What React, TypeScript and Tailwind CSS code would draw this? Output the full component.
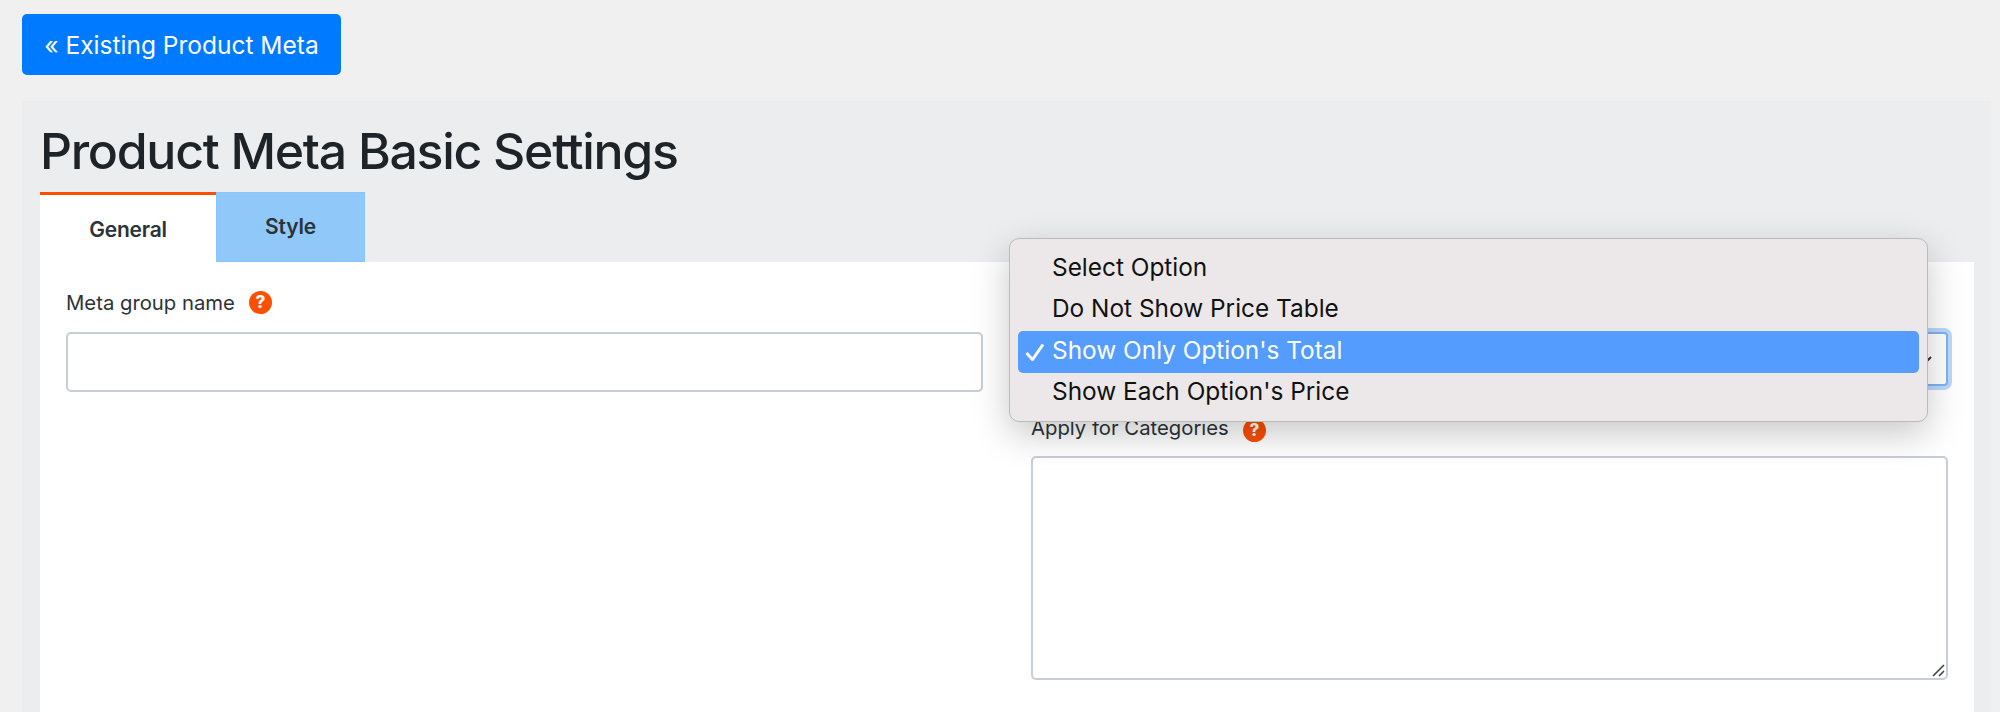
import React from "react";

function Help() {
  return (
    <span className="inline-flex h-[23px] w-[23px] items-center justify-center rounded-full bg-[#fc4f00] text-[17px] font-extrabold leading-none text-white">
      ?
    </span>
  );
}

const options = ["Select Option", "Do Not Show Price Table", "Show Only Option's Total", "Show Each Option's Price"];

export default function App() {
  return (
    <div className="relative h-[712px] w-[2000px] overflow-hidden bg-[#f0f0f1] font-['Inter','Liberation_Sans',sans-serif] text-[#212529]">
      <div className="pl-[22px] pt-[14px]">
        <button className="flex h-[61px] w-[319px] items-center justify-center rounded-[5px] bg-[#007bff] pt-[2px] text-[24.5px] text-white">
          « Existing Product Meta
        </button>
      </div>
      <div className="ml-[22px] mr-[9px] mt-[26px] h-[700px] bg-[#ecedef] pl-[18px] pr-[17px] pt-[22px]">
        <h1 className="h-[69px] text-[50px] font-medium leading-[56px] tracking-[-1.3px] text-[#1d2327]">Product Meta Basic Settings</h1>
        <div className="flex h-[70px]">
          <div className="flex w-[176px] items-center justify-center border-t-[3px] border-[#fc4f00] bg-white pt-[3px] text-[21px] font-semibold tracking-[-0.2px] text-[#2c3338]">
            General
          </div>
          <div className="flex w-[149px] items-start justify-center border border-[#8ac4f8] bg-[#90c9f9] pt-[18px] text-[21px] font-semibold tracking-[-0.2px] text-[#2c3338]">
            Style
          </div>
        </div>
        <div className="grid h-[500px] grid-cols-2 gap-x-[48px] bg-white px-[26px] pt-[25px]">
          <div>
            <div className="flex h-[45px] items-start gap-[14px] text-[20.3px] leading-[32px] text-[#2c3338]">
              <span>Meta group name</span>
              <span className="flex pt-[4px]"><Help /></span>
            </div>
            <div className="h-[60px] rounded-[5px] border-2 border-[#c8ced6] bg-white" />
          </div>
          <div>
            <div className="h-[45px]" />
            <div className="relative flex h-[54px] items-center justify-end rounded-[4px] border-2 border-[#7db3f5] bg-white pr-[14px] shadow-[0_0_0_4px_#bcd8fb]">
              <svg width="9" height="6" viewBox="0 0 9 6" fill="none" stroke="#333" strokeWidth="2"><path d="M1 1l3.5 3.5L8 1" /></svg>
            </div>
            <div className="mt-[18px] flex h-[52px] items-center gap-[14px] pb-[4px] text-[20.3px] leading-[32px] text-[#2c3338]">
              <span>Apply for Categories</span>
              <span className="mt-[5px] flex"><Help /></span>
            </div>
            <div className="relative h-[224px] rounded-[5px] border-2 border-[#c8ced6] bg-white">
              <svg className="absolute bottom-[1px] right-[1px]" width="13" height="13" viewBox="0 0 13 13" fill="none" stroke="#444" strokeWidth="1.6"><path d="M1 12L12 1M7 12l5-5" /></svg>
            </div>
          </div>
        </div>
      </div>
      <div className="absolute left-[1009px] top-[238px] h-[184px] w-[919px] rounded-[10px] border border-[#bdbaba] bg-[#ece8e9] px-[8px] pt-[9px] shadow-[0_12px_36px_rgba(0,0,0,0.22)]">
        {options.map((o, i) => (
          <div
            key={o}
            className={
              "relative flex h-[41.5px] items-center rounded-[5px] pb-[3px] pl-[34px] text-[24.4px] " +
              (i === 2 ? "bg-[#549dff] text-white" : "text-[#111]")
            }
          >
            {i === 2 && (
              <svg className="absolute left-[7px] top-[12px]" width="20" height="18" viewBox="0 0 20 18" fill="none" stroke="#fff" strokeWidth="3"><path d="M1.5 10l6 6.5L18 1.5" /></svg>
            )}
            {o}
          </div>
        ))}
      </div>
    </div>
  );
}
